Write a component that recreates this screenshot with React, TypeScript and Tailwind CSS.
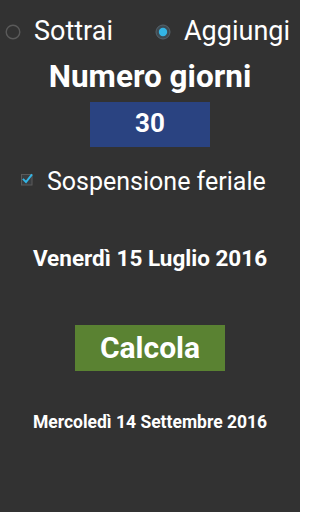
import React from 'react'

function Radio({ checked }: { checked?: boolean }) {
  return (
    <svg width="16" height="16" viewBox="0 0 16 16" className="shrink-0">
      {checked ? (
        <>
          <circle cx="8" cy="8" r="7" fill="#3d4a52" stroke="#56626a" strokeWidth="1" />
          <circle cx="8" cy="8" r="4.2" fill="#33b5e5" />
        </>
      ) : (
        <circle cx="8" cy="8" r="6.8" fill="none" stroke="#5a5a5a" strokeWidth="1.4" />
      )}
    </svg>
  )
}

function CheckBox() {
  return (
    <svg width="14" height="14" viewBox="0 0 14 14" className="shrink-0">
      <rect x="1.5" y="2.5" width="10.5" height="10.5" fill="#3a3d40" stroke="#5a5a5a" strokeWidth="1" />
      <path d="M3.6 7.6 L6 10 L11.4 3.2" fill="none" stroke="#33b5e5" strokeWidth="2" strokeLinecap="square" />
    </svg>
  )
}

export default function App() {
  return (
    <div
      className="w-[300px] h-[512px] bg-[#323232] text-white overflow-hidden flex flex-col items-center"
      style={{ fontFamily: 'Roboto, "Noto Sans", sans-serif' }}
    >
      {/* Radio group */}
      <div className="w-full flex items-center pt-[18px] h-[45px]">
        <div className="flex items-center pl-[5px] w-[155px]">
          <Radio />
          <span className="ml-[13px] text-[27px] leading-[27px]">Sottrai</span>
        </div>
        <div className="flex items-center">
          <Radio checked />
          <span className="ml-[13px] text-[27px] leading-[27px]">Aggiungi</span>
        </div>
      </div>

      {/* Numero giorni */}
      <h1 className="mt-[16px] text-[31.5px] leading-[32px] font-bold">Numero giorni</h1>
      <div className="mt-[9px] w-[120px] h-[45px] bg-[#2a4381] flex items-center justify-center pb-[3px]">
        <span className="text-[26px] leading-[26px] font-bold">30</span>
      </div>

      {/* Sospensione feriale */}
      <div className="w-full flex items-center mt-[22px] pl-[20px] h-[25px]">
        <div className="-mt-[5px]">
          <CheckBox />
        </div>
        <span className="ml-[13px] text-[25px] leading-[25px]">Sospensione feriale</span>
      </div>

      {/* Data iniziale */}
      <p className="mt-[53px] text-[22.5px] leading-[22px] font-bold">Venerdì 15 Luglio 2016</p>

      <button className="mt-[56px] w-[150px] h-[46px] bg-[#5a8232] flex items-center justify-center">
        <span className="text-[30px] leading-[30px] font-bold">Calcola</span>
      </button>

      {/* Risultato */}
      <p className="mt-[42px] text-[17.5px] leading-[18px] font-bold">Mercoledì 14 Settembre 2016</p>
    </div>
  )
}
